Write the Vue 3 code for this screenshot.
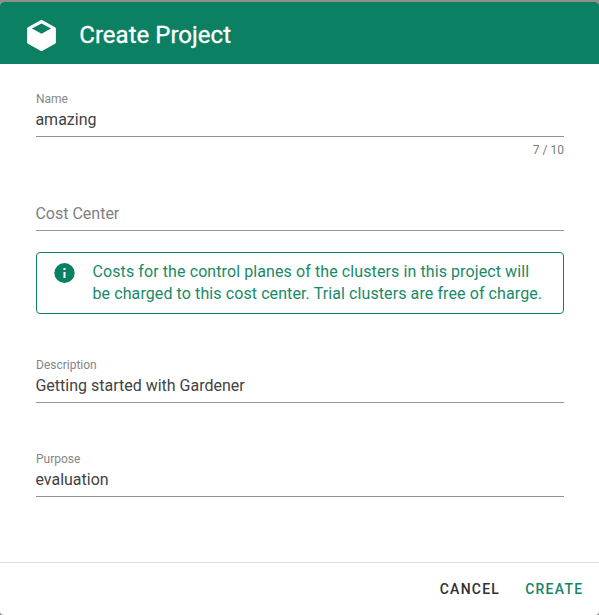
<script setup>
import { ref } from 'vue'

const name = ref('amazing')
const description = ref('Getting started with Gardener')
const purpose = ref('evaluation')
</script>

<template>
  <div class="backdrop">
    <section class="dialog">
      <header class="title-bar">
        <svg class="cube" viewBox="-0.2 0 24.4 24" preserveAspectRatio="none">
          <path d="M21,16.5C21,16.88 20.79,17.21 20.47,17.38L12.57,21.82C12.41,21.94 12.21,22 12,22C11.79,22 11.59,21.94 11.43,21.82L3.53,17.38C3.21,17.21 3,16.88 3,16.5V7.5C3,7.12 3.21,6.79 3.53,6.62L11.43,2.18C11.59,2.06 11.79,2 12,2C12.21,2 12.41,2.06 12.57,2.18L20.47,6.62C20.79,6.79 21,7.12 21,7.5V16.5M12,4.15L6.04,7.5L12,10.85L17.96,7.5L12,4.15Z" />
        </svg>
        <h1 class="title">Create Project</h1>
      </header>

      <main class="content">
        <div class="field">
          <div class="label">Name</div>
          <div class="value">{{ name }}</div>
          <div class="counter">{{ name.length }} / 10</div>
        </div>
        <div class="field cost">
          <div class="label"></div>
          <div class="value placeholder">Cost Center</div>
        </div>
        <div class="alert">
          <svg class="info" viewBox="-0.25 0 24.5 24" preserveAspectRatio="none">
            <path d="M13,9H11V7H13M13,17H11V11H13M12,2A10,10 0 0,0 2,12A10,10 0 0,0 12,22A10,10 0 0,0 22,12A10,10 0 0,0 12,2Z" />
          </svg>
          <div class="alert-text">Costs for the control planes of the clusters in this project will<br>be charged to this cost center. Trial clusters are free of charge.</div>
        </div>
        <div class="field description">
          <div class="label">Description</div>
          <div class="value">{{ description }}</div>
        </div>
        <div class="field">
          <div class="label">Purpose</div>
          <div class="value">{{ purpose }}</div>
        </div>
      </main>

      <footer class="actions">
        <button class="btn">Cancel</button>
        <button class="btn primary">Create</button>
      </footer>
    </section>
  </div>
</template>

<style>
body {
  margin: 0;
  overflow: hidden;
}
</style>

<style scoped>
.backdrop {
  box-sizing: border-box;
  width: 599px;
  height: 615px;
  padding-top: 2px;
  background: #8f8f8f;
  font-family: Roboto, sans-serif;
}
.dialog {
  display: flex;
  flex-direction: column;
  height: 613px;
  border-radius: 4px;
  overflow: hidden;
  background: #fff;
}
.title-bar {
  display: flex;
  align-items: center;
  box-sizing: border-box;
  height: 62px;
  flex: none;
  padding: 5px 22px 0;
  background: #0b8062;
  color: #fff;
}
.cube {
  width: 39px;
  height: 37px;
  fill: #fff;
}
.title {
  margin: -1px 0 0 18.3px;
  font-size: 24px;
  font-weight: 400;
  line-height: 32px;
  letter-spacing: 0.02px;
  -webkit-text-stroke: 0.3px #fff;
}
.content {
  flex: 1;
  padding: 26px 35px 0 36px;
}
.field {
  height: 94px;
}
.label {
  height: 18px;
  font-size: 12px;
  line-height: 18px;
  color: #858585;
}
.value {
  height: 28px;
  border-bottom: 1px solid #949494;
  font-size: 16px;
  font-weight: 400;
  line-height: 23px;
  text-indent: -0.6px;
  color: #424242;
}
.value.placeholder {
  color: #808080;
}
.counter {
  padding-top: 5px;
  font-size: 12px;
  line-height: 16px;
  text-align: right;
  color: #7c7c7c;
}
.cost {
  height: 68px;
}
.alert {
  display: flex;
  box-sizing: border-box;
  height: 62px;
  border: 1px solid #0b8062;
  border-radius: 4px;
  padding: 8px 15px;
  color: #0b8062;
}
.info {
  flex: none;
  width: 25px;
  height: 24px;
  fill: currentColor;
}
.alert-text {
  margin-left: 15.5px;
  font-size: 16px;
  line-height: 22px;
  letter-spacing: 0.095px;
  white-space: nowrap;
  color: #188a69;
}
.description {
  margin-top: 42px;
}
.actions {
  display: flex;
  justify-content: flex-end;
  align-items: center;
  box-sizing: border-box;
  height: 53px;
  flex: none;
  padding: 0 15.6px 0 0;
  gap: 25px;
  border-top: 1px solid #dfdfdf;
}
.btn {
  padding: 0;
  border: 0;
  background: none;
  font-family: inherit;
  font-size: 14px;
  font-weight: 500;
  line-height: 20px;
  letter-spacing: 1.25px;
  text-transform: uppercase;
  color: #303030;
}
.btn.primary {
  color: #148566;
}
</style>
